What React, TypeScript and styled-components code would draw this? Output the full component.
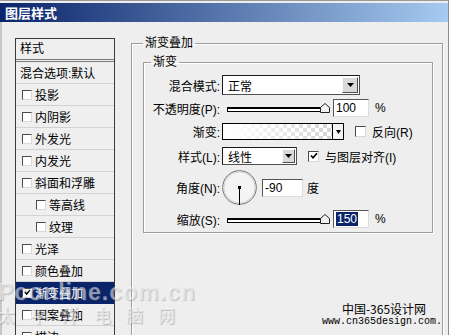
import React from "react";
import styled, { createGlobalStyle } from "styled-components";

const FONT = `"Liberation Sans", "Noto Sans CJK SC", sans-serif`;

const Global = createGlobalStyle`
  html, body { margin: 0; padding: 0; background: #eeeeee; }
  body { font-family: ${FONT}; font-size: 12px; color: #000; }
  * { box-sizing: border-box; }
`;

const Window = styled.div`
  position: relative;
  width: 449px;
  height: 335px;
  overflow: hidden;
  background: #eeeeee;
  border-top: 1px solid #9a9a9a;
  border-right: 1px solid #8c8c8c;
`;

const TitleBar = styled.div`
  margin-top: 2px;
  height: 19px;
  padding-left: 5px;
  background: linear-gradient(to right, #0a246a, #a6caf0);
  color: #fff;
  font-family: "Noto Sans CJK SC", sans-serif;
  font-weight: bold;
  font-size: 13px;
  line-height: 19px;
`;

const Body = styled.div`
  display: flex;
  align-items: flex-start;
  height: 313px;
  padding: 14px 0 0 13px;
  border-left: 2px solid #c6c6c6;
`;

const StyleList = styled.div`
  flex-shrink: 0;
  width: 100px;
  height: 320px;
  margin-top: 2px;
  background: #efefef;
  border: 1px solid #3a3a3a;
`;

const ListHeader = styled.div`
  height: 23px;
  padding-left: 4px;
  line-height: 20px;
  border-bottom: 3px double #7a7a7a;
`;

const ListRow = styled.div<{ $indent: number; $selected?: boolean }>`
  display: flex;
  align-items: center;
  gap: 3px;
  height: 22px;
  padding-left: ${(p) => p.$indent}px;
  border-bottom: 1px solid ${(p) => (p.$selected ? "#0a246a" : "#d2d2d2")};
  background: ${(p) => (p.$selected ? "#0a246a" : "transparent")};
  color: ${(p) => (p.$selected ? "#fff" : "#000")};
  white-space: nowrap;
`;

const Check = styled.span<{ $size: number }>`
  flex-shrink: 0;
  display: inline-flex;
  align-items: center;
  justify-content: center;
  width: ${(p) => p.$size}px;
  height: ${(p) => p.$size}px;
  background: #fff;
  border: 1px solid;
  border-color: #4a4a4a #d8d8d8 #d8d8d8 #4a4a4a;
`;

const RightCol = styled.div`
  margin-left: 16px;
`;

const OuterGroup = styled.fieldset`
  width: 312px;
  height: 330px;
  margin: 0;
  padding: 0 0 0 11px;
  border: 1px solid #9c9c9c;
  box-shadow: inset 1px 1px 0 #fff, 1px 1px 0 #fff;
  min-width: 0;
`;

const Legend = styled.legend<{ $ml: number }>`
  margin-left: ${(p) => p.$ml}px;
  padding: 0 2px;
  font-size: 12px;
  line-height: 14px;
`;

const InnerGroup = styled.fieldset`
  width: 290px;
  margin: 5px 0 0 0;
  padding: 0 0 5px 0;
  border: 1px solid #9c9c9c;
  box-shadow: inset 1px 1px 0 #fff, 1px 1px 0 #fff;
  min-width: 0;
`;

const Row = styled.div<{ $h: number; $mt: number }>`
  display: grid;
  grid-template-columns: 76px auto;
  column-gap: 2px;
  align-items: center;
  height: ${(p) => p.$h}px;
  margin-top: ${(p) => p.$mt}px;
`;

const Label = styled.span`
  text-align: right;
  white-space: nowrap;
`;

const Controls = styled.div`
  display: flex;
  align-items: center;
  white-space: nowrap;
`;

const Select = styled.div<{ $w: number; $h: number }>`
  display: flex;
  align-items: center;
  justify-content: space-between;
  width: ${(p) => p.$w}px;
  height: ${(p) => p.$h}px;
  padding: 1px 1px 1px 5px;
  background: #fff;
  border: 1px solid;
  border-color: #1a1a1a #505050 #505050 #1a1a1a;
`;

const DropBtn = styled.span<{ $w: number }>`
  display: flex;
  align-items: center;
  justify-content: center;
  width: ${(p) => p.$w}px;
  height: 100%;
  background: #d9d9d9;
  border: 1px solid;
  border-color: #fafafa #505050 #505050 #fafafa;
`;

const Slider = styled.div`
  position: relative;
  width: 103px;
  height: 10px;
  margin-left: 5px;
  padding-top: 4px;
`;

const Track = styled.div`
  width: 97px;
  height: 5px;
  background: #fff;
  border: 1px solid #000;
  border-top-width: 2px;
`;

const Thumb = styled.svg`
  position: absolute;
  left: 93px;
  top: 0;
`;

const NumBox = styled.div<{ $w: number; $ml: number }>`
  width: ${(p) => p.$w}px;
  height: 18px;
  margin-left: ${(p) => p.$ml}px;
  padding-left: 2px;
  background: #fff;
  border: 1px solid;
  border-color: #555 #dcdcdc #dcdcdc #555;
  line-height: 16px;
  font-size: 12px;
`;

const Selected = styled.span`
  background: #0a246a;
  color: #fff;
  padding: 0 1px;
`;

const Unit = styled.span<{ $ml: number }>`
  margin-left: ${(p) => p.$ml}px;
`;

const GradientBox = styled.div`
  width: 111px;
  height: 17px;
  border: 1px solid #000;
  background: linear-gradient(to right, #fff 8%, rgba(255, 255, 255, 0) 100%),
    repeating-conic-gradient(#d4d4d4 0 25%, #fff 0 50%) 0 0 / 8px 8px;
`;

const SmallDrop = styled.span`
  display: flex;
  align-items: center;
  justify-content: center;
  width: 11px;
  height: 17px;
  background: #f4f4f4;
  border: 1px solid #000;
  border-left: none;
`;

const CheckLabel = styled.label<{ $ml: number }>`
  display: flex;
  align-items: center;
  gap: 6px;
  margin-left: ${(p) => p.$ml}px;
`;

const Credit = styled.div`
  position: absolute;
  left: 322px;
  top: 300px;
  text-align: center;
  width: 122px;
`;

const CreditTitle = styled.div`
  font-family: "Noto Sans CJK SC", sans-serif;
  font-size: 12px;
  line-height: 15px;
  margin-left: 2px;
`;

const CreditUrl = styled.div`
  font-family: "Liberation Mono", monospace;
  font-size: 10px;
  line-height: 12px;
  text-align: left;
`;

const Watermark = styled.div`
  position: absolute;
  left: -2px;
  top: 280px;
  pointer-events: none;
  color: rgba(255, 255, 255, 0.5);
  text-shadow: 1px 1px 1px rgba(90, 90, 90, 0.3);
  font-weight: bold;
`;

const WmLatin = styled.div`
  font-family: "Liberation Sans", sans-serif;
  font-size: 23px;
  line-height: 22px;
  letter-spacing: 1px;
`;

const WmCjk = styled.div`
  font-family: "Noto Sans CJK SC", sans-serif;
  font-size: 17px;
  line-height: 22px;
  letter-spacing: 15px;
  margin-top: 1px;
`;

const Arrow = ({ w = 7 }: { w?: number }) => (
  <svg width={w} height={4} viewBox={`0 0 ${w} 4`}>
    <path d={`M0 0 H${w} L${w / 2} 4 Z`} fill="#000" />
  </svg>
);

const Tick = ({ s = 8 }: { s?: number }) => (
  <svg width={s} height={s} viewBox="0 0 8 8">
    <path d="M1 3.5 L3 5.8 L7 1.2" fill="none" stroke="#000" strokeWidth="1.6" />
  </svg>
);

const SliderCtl = () => (
  <Slider>
    <Track />
    <Thumb width="10" height="10" viewBox="0 0 10 10">
      <path d="M0.5 9.5 V4.5 L5 0.5 L9.5 4.5 V9.5 Z" fill="#f2f2f2" stroke="#222" />
    </Thumb>
  </Slider>
);

const Dial = () => (
  <svg width="35" height="35" viewBox="0 0 35 35">
    <circle cx="17.5" cy="17.5" r="16.8" fill="#f4f4f4" stroke="#707070" />
    <circle cx="17.5" cy="17.5" r="15.6" fill="none" stroke="#d2d2d2" />
    <line x1="17.5" y1="17.5" x2="17.5" y2="35" stroke="#000" />
    <rect x="16" y="16" width="3" height="3" fill="#000" />
  </svg>
);

type Item = { t: string; plain?: boolean; indent?: boolean; checked?: boolean; selected?: boolean };

const items: Item[] = [
  { t: "混合选项:默认", plain: true },
  { t: "投影" },
  { t: "内阴影" },
  { t: "外发光" },
  { t: "内发光" },
  { t: "斜面和浮雕" },
  { t: "等高线", indent: true },
  { t: "纹理", indent: true },
  { t: "光泽" },
  { t: "颜色叠加" },
  { t: "渐变叠加", checked: true, selected: true },
  { t: "图案叠加" },
  { t: "描边" },
];

export default function App() {
  return (
    <>
      <Global />
      <Window>
        <TitleBar>图层样式</TitleBar>
        <Body>
          <StyleList>
            <ListHeader>样式</ListHeader>
            {items.map((it) => (
              <ListRow key={it.t} $indent={it.plain ? 4 : it.indent ? 20 : 6} $selected={it.selected}>
                {!it.plain && <Check $size={10}>{it.checked && <Tick s={7} />}</Check>}
                <span>{it.t}</span>
              </ListRow>
            ))}
          </StyleList>
          <RightCol>
            <OuterGroup>
              <Legend $ml={0}>渐变叠加</Legend>
              <InnerGroup>
                <Legend $ml={7}>渐变</Legend>
                <Row $h={20} $mt={6}>
                  <Label>混合模式:</Label>
                  <Controls>
                    <Select $w={138} $h={20}>
                      <span>正常</span>
                      <DropBtn $w={16}>
                        <Arrow />
                      </DropBtn>
                    </Select>
                  </Controls>
                </Row>
                <Row $h={18} $mt={4}>
                  <Label>不透明度(P):</Label>
                  <Controls>
                    <SliderCtl />
                    <NumBox $w={36} $ml={3}>100</NumBox>
                    <Unit $ml={6}>%</Unit>
                  </Controls>
                </Row>
                <Row $h={17} $mt={6}>
                  <Label>渐变:</Label>
                  <Controls>
                    <GradientBox />
                    <SmallDrop>
                      <Arrow w={5} />
                    </SmallDrop>
                    <CheckLabel $ml={11}>
                      <Check $size={11} />
                      <span>反向(R)</span>
                    </CheckLabel>
                  </Controls>
                </Row>
                <Row $h={18} $mt={7}>
                  <Label>样式(L):</Label>
                  <Controls>
                    <Select $w={75} $h={18}>
                      <span>线性</span>
                      <DropBtn $w={13}>
                        <Arrow />
                      </DropBtn>
                    </Select>
                    <CheckLabel $ml={11}>
                      <Check $size={11}>
                        <Tick s={8} />
                      </Check>
                      <span>与图层对齐(I)</span>
                    </CheckLabel>
                  </Controls>
                </Row>
                <Row $h={35} $mt={5}>
                  <Label>角度(N):</Label>
                  <Controls>
                    <Dial />
                    <NumBox $w={41} $ml={5}>-90</NumBox>
                    <Unit $ml={4}>度</Unit>
                  </Controls>
                </Row>
                <Row $h={17} $mt={5}>
                  <Label>缩放(S):</Label>
                  <Controls>
                    <SliderCtl />
                    <NumBox $w={36} $ml={3}>
                      <Selected>150</Selected>
                    </NumBox>
                    <Unit $ml={6}>%</Unit>
                  </Controls>
                </Row>
              </InnerGroup>
            </OuterGroup>
          </RightCol>
        </Body>
        <Watermark>
          <WmLatin>Pconline.com.cn</WmLatin>
          <WmCjk>太平洋电脑网</WmCjk>
        </Watermark>
        <Credit>
          <CreditTitle>中国-365设计网</CreditTitle>
          <CreditUrl>www.cn365design.com.</CreditUrl>
        </Credit>
      </Window>
    </>
  );
}
